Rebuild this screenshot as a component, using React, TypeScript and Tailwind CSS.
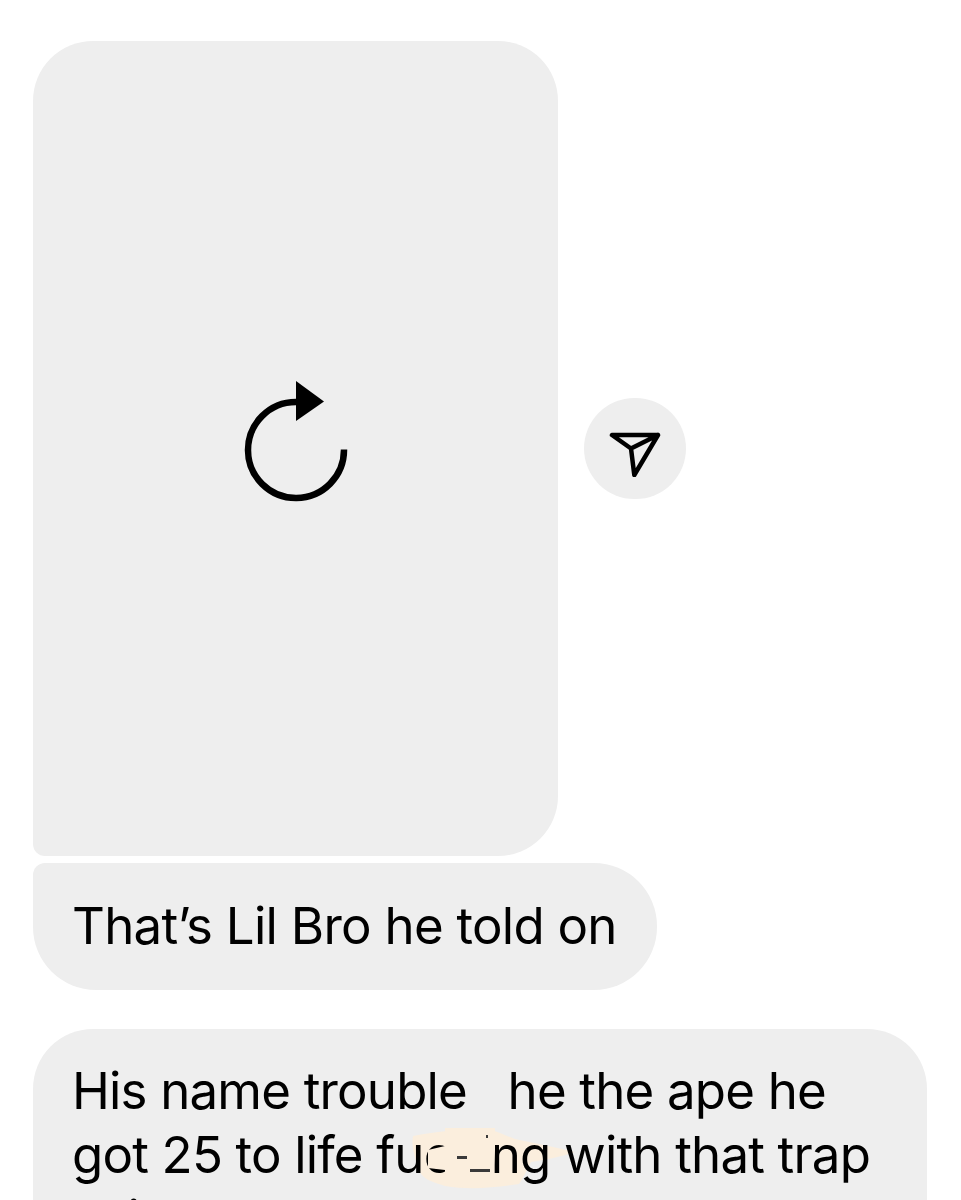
const fontStack = "font-['Inter','Liberation_Sans',sans-serif]";

function ReplayIcon() {
  return (
    <svg width="110" height="124" viewBox="0 0 110 124" fill="none" className="mt-[-16px]">
      <path d="M103 70.500A48 48 0 1 1 55 23" stroke="#000" strokeWidth="6.500" />
      <path d="M55 2L83 22.500L55 42Z" fill="#000" />
    </svg>
  );
}

function SendIcon() {
  return (
    <svg width="56" height="56" viewBox="0 0 56 56" fill="none">
      <path
        d="M5 14H51L27.300 54L24 27.500L5 14ZM24 27.500L51 14"
        stroke="#000"
        strokeWidth="4.500"
        strokeLinejoin="round"
        strokeLinecap="round"
      />
    </svg>
  );
}

// the smear sits behind the line, the patch on top hides the middle of the word
function BlotBehind() {
  return (
    <svg width="170" height="70" viewBox="0 0 170 70" className="absolute left-[376px] top-[97px]">
      <path
        d="M4 10C24 6 52 3 72 2C84 3 92 8 106 13C124 17 146 21 166 26C150 31 136 34 122 36C118 44 114 52 110 58C84 62 60 64 36 60C24 56 14 54 10 44C6 32 2 20 4 10Z"
        fill="#fbeedd"
      />
    </svg>
  );
}

function BlotOver() {
  return (
    <svg width="75" height="60" viewBox="0 0 75 60" className="absolute left-[392px] top-[99px]">
      <path d="M3 22L20 18V0H70V22L68 52H20V42L3 40Z" fill="#fbeedd" />
      <rect x="32" y="28" width="10" height="3" fill="#3a3a3a" />
      <rect x="45" y="41" width="20" height="3" fill="#3a3a3a" />
      <rect x="61" y="7" width="2" height="3" fill="#3a3a3a" />
    </svg>
  );
}

export default function App() {
  return (
    <div className={`h-[1200px] overflow-hidden bg-white pl-[33px] pt-[41px] text-black ${fontStack}`}>
      <div className="flex items-center gap-[26px]">
        <div className="flex h-[815px] w-[525px] items-center justify-center rounded-[60px] rounded-bl-[12px] bg-[#eeeeee]">
          <ReplayIcon />
        </div>
        <button className="flex h-[101px] w-[102px] items-center justify-center rounded-full bg-[#eeeeee]">
          <SendIcon />
        </button>
      </div>

      <div className="mt-[7px] h-[127px] w-[624px] whitespace-nowrap rounded-[63px] rounded-tl-[12px] bg-[#eeeeee] pl-[39px] pt-[30px] text-[51px] leading-[65px] tracking-[-0.74px]">
        That’s Lil Bro he told on
      </div>

      <div className="relative mt-[39px] h-[240px] w-[894px] rounded-[60px] bg-[#eeeeee] pl-[39px] pt-[30px] text-[51px] leading-[64px] tracking-[-0.82px]">
        <BlotBehind />
        <div className="relative">
          <p>His name trouble&nbsp;&nbsp; he the ape he</p>
          <p>got 25 to life fucking with that trap</p>
          <p>shit</p>
        </div>
        <BlotOver />
      </div>
    </div>
  );
}
